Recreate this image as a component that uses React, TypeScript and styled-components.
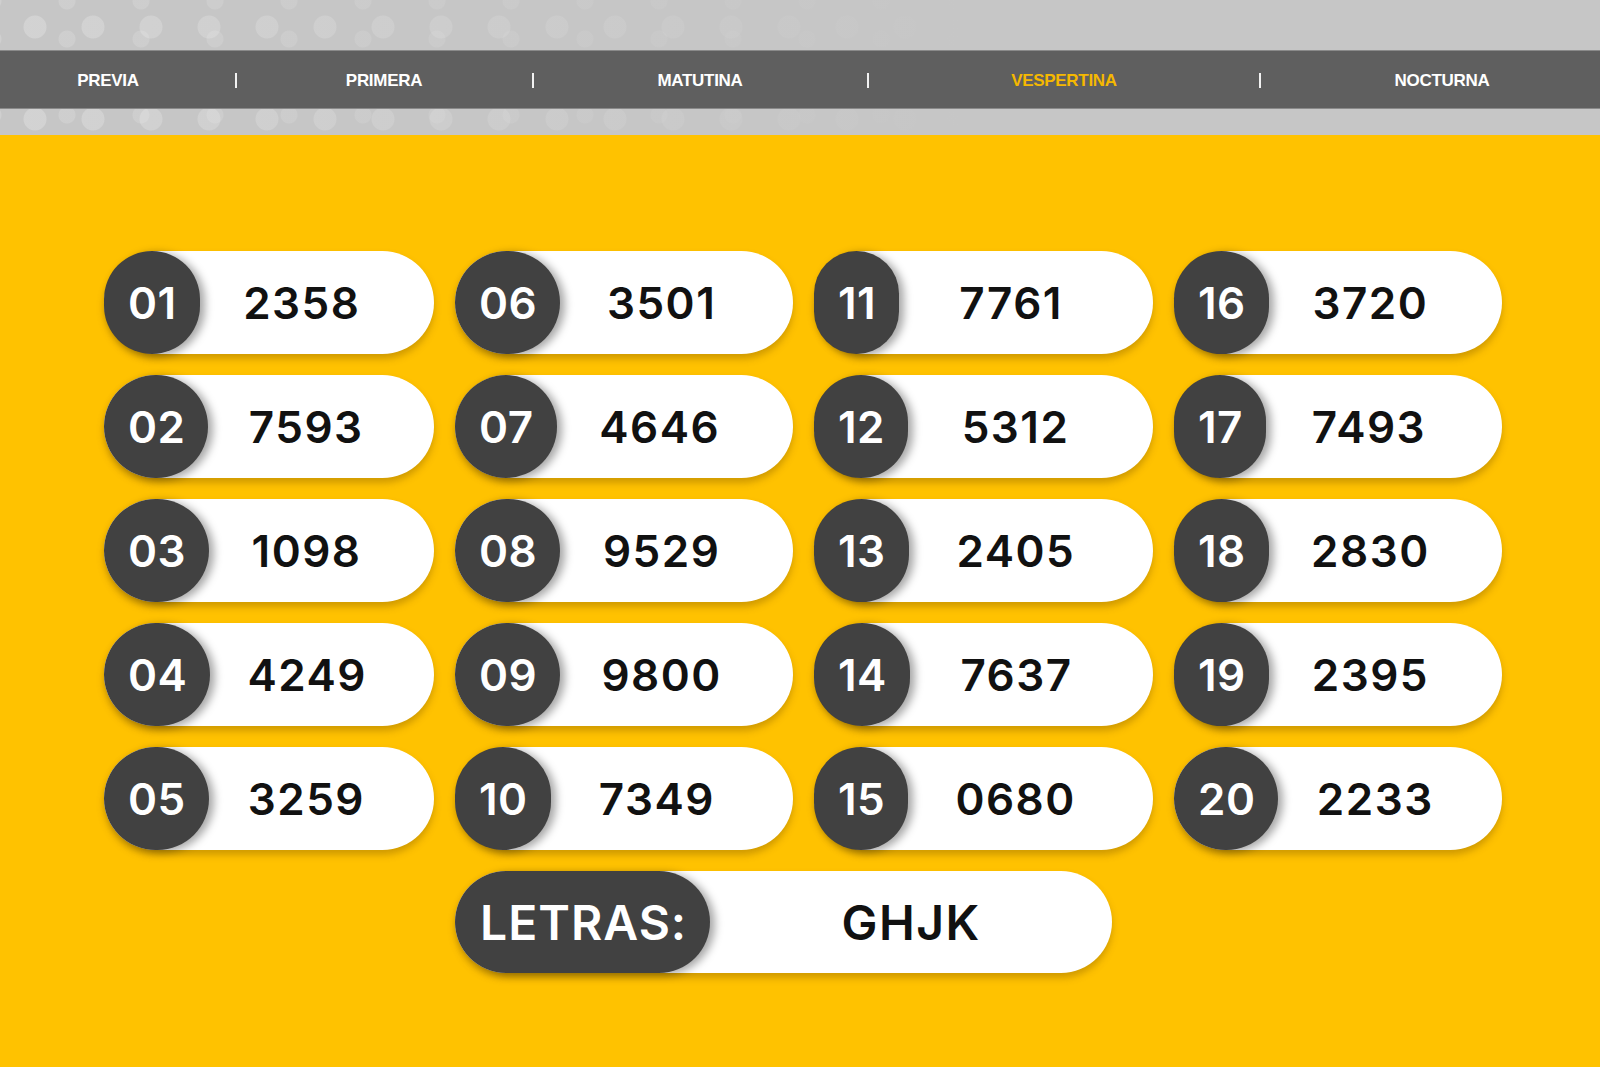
import React from "react";
import styled, { createGlobalStyle } from "styled-components";

const Global = createGlobalStyle`
  html, body { margin: 0; padding: 0; }
  body { background: #ffc200; font-family: Inter, "Liberation Sans", sans-serif; }
`;

const Page = styled.div`
  width: 1600px;
  min-height: 1067px;
  background: #ffc200;
  overflow: hidden;
`;

const Header = styled.header`
  padding: 50px 0 26px;
  background-color: #c6c6c6;
  background-image:
    linear-gradient(to right, rgba(198,198,198,0) 0%, rgba(198,198,198,0.5) 30%, #c6c6c6 60%),
    radial-gradient(circle, rgba(255,255,255,0.22) 0 11px, rgba(255,255,255,0) 12px),
    radial-gradient(circle, rgba(255,255,255,0.16) 0 8px, rgba(255,255,255,0) 9px);
  background-size: 100% 100%, 58px 46px, 74px 38px;
  background-position: 0 0, 6px 4px, 30px 20px;
`;

const NavBar = styled.nav`
  height: 59px;
  background: #5f5f5f;
  border-top: 1px solid #8a8a8a;
  border-bottom: 1px solid #8a8a8a;
  box-sizing: border-box;
  display: grid;
  grid-template-columns: 128px 128px 168px 130px 204px 132px 260px 132px 232px;
  padding-left: 44px;
  align-items: center;
`;

const NavItem = styled.a<{ $active?: boolean }>`
  justify-self: center;
  font-family: "Liberation Sans", Arial, sans-serif;
  font-weight: 700;
  font-size: 17px;
  letter-spacing: -0.3px;
  padding-top: 2px;
  color: ${(p) => (p.$active ? "#f5b800" : "#ffffff")};
  text-decoration: none;
`;

const Sep = styled.span`
  justify-self: center;
  width: 2px;
  height: 15px;
  margin-top: 2px;
  background: #f2f2f2;
`;

const Main = styled.main`
  padding: 116px 0 0 104px;
`;

const Grid = styled.div`
  width: 1400px;
  display: grid;
  grid-template-columns: 330px 338px 339px 328px;
  column-gap: 21px;
  row-gap: 21px;
  grid-auto-flow: column;
  grid-template-rows: repeat(5, 103px);
`;

const Pill = styled.div`
  display: flex;
  align-items: stretch;
  height: 103px;
  background: #ffffff;
  border-radius: 52px;
  box-shadow: 0 5px 7px rgba(120, 80, 0, 0.35);
`;

const Badge = styled.div`
  display: flex;
  align-items: center;
  justify-content: center;
  padding: 0 23px 0 24px;
  background: #414141;
  border-radius: 52px;
  color: #ffffff;
  font-weight: 600;
  font-size: 44px;
  letter-spacing: 0.5px;
  box-shadow: 5px 2px 8px rgba(0, 0, 0, 0.35);
`;

const Value = styled.div<{ $padRight: number }>`
  flex: 1;
  display: flex;
  align-items: center;
  justify-content: center;
  padding-right: ${(p) => p.$padRight}px;
  color: #111111;
  font-weight: 600;
  font-size: 44px;
  letter-spacing: 1.5px;
`;

const LetrasRow = styled.div`
  padding: 21px 0 0 351px;
`;

const LetrasPill = styled(Pill)`
  width: 657px;
  height: 102px;
`;

const LetrasBadge = styled(Badge)`
  font-size: 48px;
  padding: 0 23px 0 25px;
  letter-spacing: 1px;
`;

const LetrasValue = styled(Value)`
  font-size: 48px;
`;

const numbers = [
  ["01", "2358"], ["02", "7593"], ["03", "1098"], ["04", "4249"], ["05", "3259"],
  ["06", "3501"], ["07", "4646"], ["08", "9529"], ["09", "9800"], ["10", "7349"],
  ["11", "7761"], ["12", "5312"], ["13", "2405"], ["14", "7637"], ["15", "0680"],
  ["16", "3720"], ["17", "7493"], ["18", "2830"], ["19", "2395"], ["20", "2233"],
];

const tabs = ["PREVIA", "PRIMERA", "MATUTINA", "VESPERTINA", "NOCTURNA"];

export default function App() {
  return (
    <Page>
      <Global />
      <Header>
        <NavBar>
          {tabs.map((t, i) => (
            <React.Fragment key={t}>
              {i > 0 && <Sep />}
              <NavItem href="#" $active={t === "VESPERTINA"}>
                {t}
              </NavItem>
            </React.Fragment>
          ))}
        </NavBar>
      </Header>
      <Main>
        <Grid>
          {numbers.map(([pos, num]) => (
            <Pill key={pos}>
              <Badge>{pos}</Badge>
              <Value $padRight={30}>{num}</Value>
            </Pill>
          ))}
        </Grid>
        <LetrasRow>
          <LetrasPill>
            <LetrasBadge>LETRAS:</LetrasBadge>
            <LetrasValue $padRight={0}>GHJK</LetrasValue>
          </LetrasPill>
        </LetrasRow>
      </Main>
    </Page>
  );
}
